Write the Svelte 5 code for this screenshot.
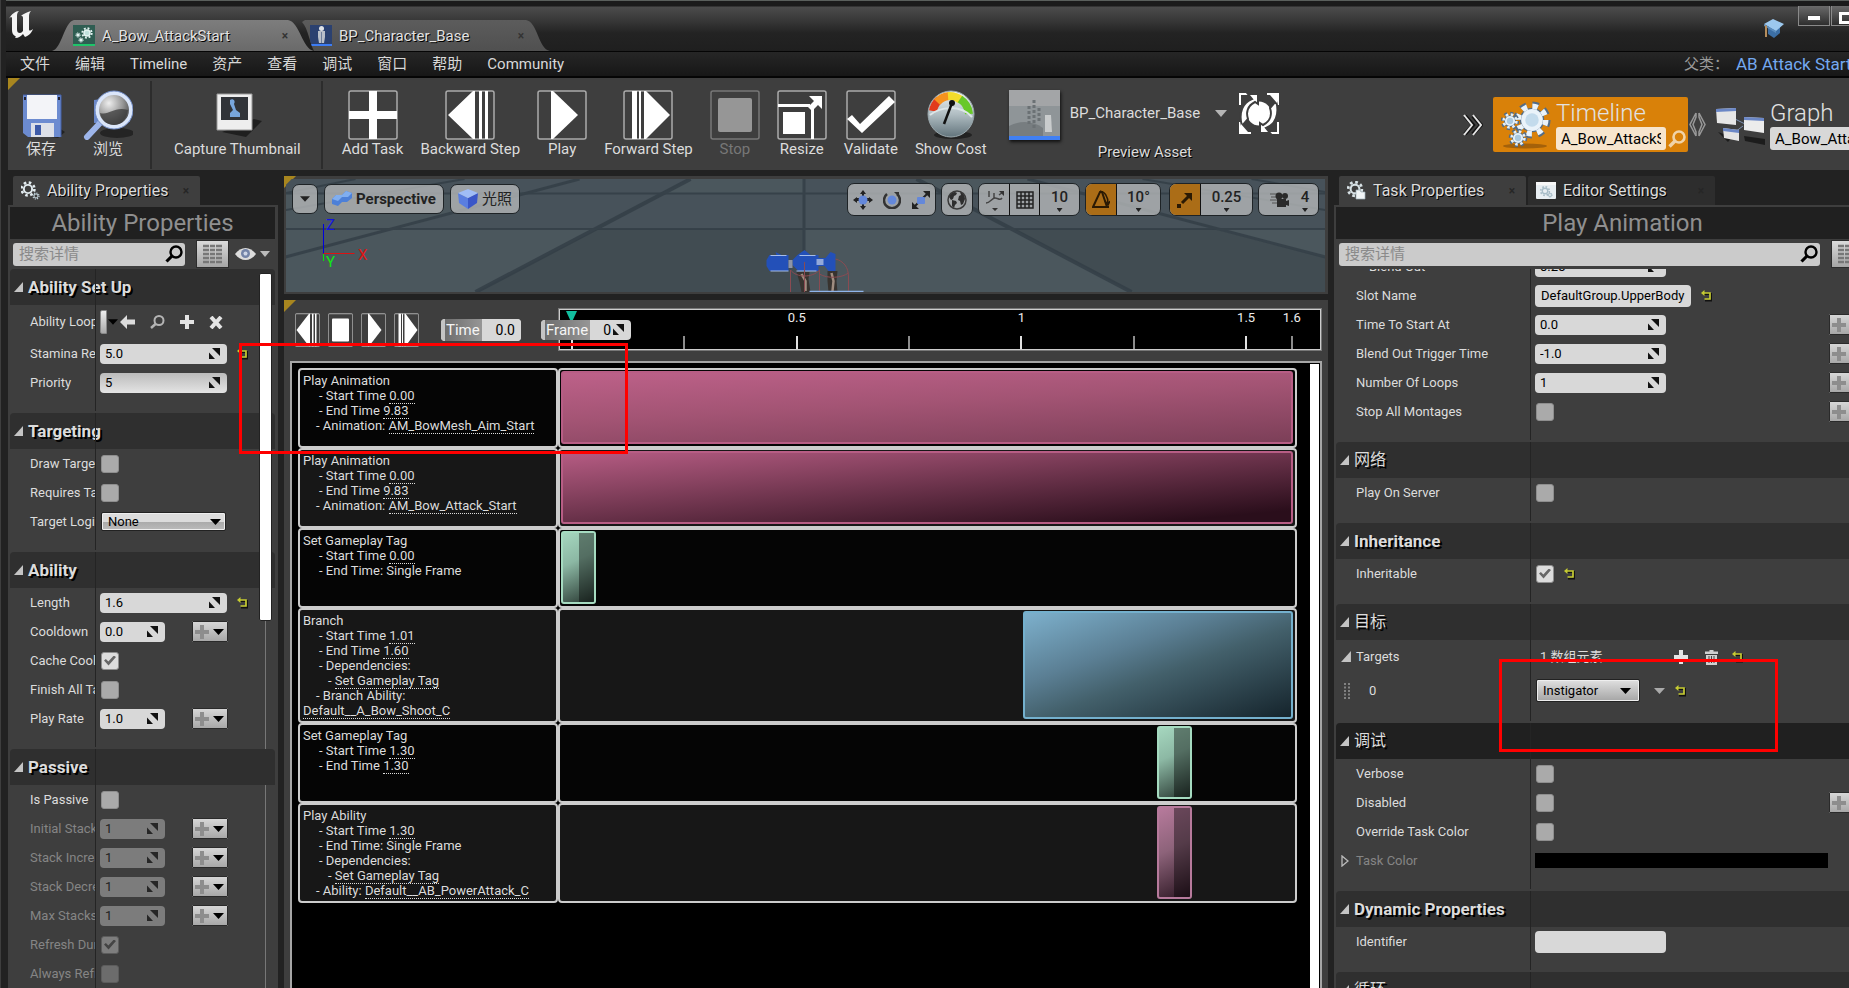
<script>
  const menus = ['文件', '编辑', 'Timeline', '资产', '查看', '调试', '窗口', '帮助', 'Community'];

  const tools = [
    { icon: 'add', label: 'Add Task' },
    { icon: 'back', label: 'Backward Step' },
    { icon: 'play', label: 'Play' },
    { icon: 'fwd', label: 'Forward Step' },
    { icon: 'stop', label: 'Stop', off: true },
    { icon: 'resize', label: 'Resize' },
    { icon: 'check', label: 'Validate' },
    { icon: 'cost', label: 'Show Cost' }
  ];

  const ability = [
    { title: 'Ability Set Up', rows: [
      { label: 'Ability Loop', kind: 'asset', tall: true },
      { label: 'Stamina Re', kind: 'num', value: '5.0', reset: true },
      { label: 'Priority', kind: 'num', value: '5', shade: true }
    ] },
    { title: 'Targeting', rows: [
      { label: 'Draw Target', kind: 'check' },
      { label: 'Requires Target', kind: 'check' },
      { label: 'Target Logic', kind: 'select', value: 'None' }
    ] },
    { title: 'Ability', rows: [
      { label: 'Length', kind: 'num', value: '1.6', reset: true },
      { label: 'Cooldown', kind: 'short', value: '0.0', plus: true },
      { label: 'Cache Cooldown', kind: 'check', on: true },
      { label: 'Finish All Tasks', kind: 'check' },
      { label: 'Play Rate', kind: 'short', value: '1.0', plus: true }
    ] },
    { title: 'Passive', rows: [
      { label: 'Is Passive', kind: 'check' },
      { label: 'Initial Stacks', kind: 'short', value: '1', plus: true, off: true },
      { label: 'Stack Increase', kind: 'short', value: '1', plus: true, off: true },
      { label: 'Stack Decrease', kind: 'short', value: '1', plus: true, off: true },
      { label: 'Max Stacks', kind: 'short', value: '1', plus: true, off: true },
      { label: 'Refresh Duration', kind: 'check', on: true, off: true },
      { label: 'Always Refresh', kind: 'check', off: true }
    ] }
  ];

  const task = [
    { rows: [
      { label: 'Blend Out', kind: 'num', value: '0.25', inset: true },
      { label: 'Slot Name', kind: 'text', value: 'DefaultGroup.UpperBody', reset: true },
      { label: 'Time To Start At', kind: 'num', value: '0.0', plus: true },
      { label: 'Blend Out Trigger Time', kind: 'num', value: '-1.0', plus: true },
      { label: 'Number Of Loops', kind: 'num', value: '1', plus: true },
      { label: 'Stop All Montages', kind: 'check', plus: true }
    ] },
    { title: '网络', cjk: true, rows: [{ label: 'Play On Server', kind: 'check' }] },
    { title: 'Inheritance', rows: [{ label: 'Inheritable', kind: 'check', on: true, reset: true }] },
    { title: '目标', cjk: true, rows: [
      { label: 'Targets', kind: 'array', tall: true, open: true },
      { label: '0', kind: 'element', mid: true, grip: true }
    ] },
    { title: '调试', cjk: true, dark: true, rows: [
      { label: 'Verbose', kind: 'check' },
      { label: 'Disabled', kind: 'check', plus: true },
      { label: 'Override Task Color', kind: 'check' },
      { label: 'Task Color', kind: 'color', closed: true, off: true }
    ] },
    { title: 'Dynamic Properties', rows: [{ label: 'Identifier', kind: 'blank', value: '' }] },
    { title: '循环', cjk: true, rows: [] }
  ];

  const ticks = [0, 1, 2, 3, 4, 5, 6].map((n) => ({
    x: 1.6 + n * 14.78,
    major: n % 2 === 0,
    text: n > 0 && n % 2 === 0 ? String(n / 4) : ''
  }));
  ticks.push({ x: 96.3, major: false, text: '1.6' });

  const tasks = [
    { name: 'Play Animation', color: 'pink soft', start: 0, span: 100, lines: [
      [1, 'Start Time', '0.00'], [1, 'End Time', '9.83'], [0, 'Animation:', 'AM_BowMesh_Aim_Start']] },
    { name: 'Play Animation', color: 'pink', start: 0, span: 100, lines: [
      [1, 'Start Time', '0.00'], [1, 'End Time', '9.83'], [0, 'Animation:', 'AM_Bow_Attack_Start']] },
    { name: 'Set Gameplay Tag', color: 'mint', start: 0, lines: [
      [1, 'Start Time', '0.00'], [1, 'End Time: Single Frame', '']] },
    { name: 'Branch', color: 'blue', start: 63.1, span: 36.9, lines: [
      [1, 'Start Time', '1.01'], [1, 'End Time', '1.60'], [1, 'Dependencies:', ''],
      [2, '', 'Set Gameplay Tag'], [0, 'Branch Ability:', 'Default__A_Bow_Shoot_C', true]] },
    { name: 'Set Gameplay Tag', color: 'mint', start: 81.4, lines: [
      [1, 'Start Time', '1.30'], [1, 'End Time', '1.30']] },
    { name: 'Play Ability', color: 'mauve', start: 81.4, lines: [
      [1, 'Start Time', '1.30'], [1, 'End Time: Single Frame', ''], [1, 'Dependencies:', ''],
      [2, '', 'Set Gameplay Tag'], [0, 'Ability:', 'Default__AB_PowerAttack_C']] }
  ];
</script>

{#snippet reset()}
  <button class="bare reset" aria-label="Reset">
    <svg width="11" height="12" viewBox="0 0 11 12" fill="none"><path d="M3 4h7v6.500H4" stroke="#111" stroke-width="2" /><path d="M2 3h7v6H3.500" stroke="#c6cc32" stroke-width="1.700" /><path d="M0 3l3.500-3v6z" fill="#c6cc32" /></svg>
  </button>
{/snippet}

{#snippet spin()}
  <svg class="spin" width="11" height="11" viewBox="0 0 11 11"><path d="M3 0h8v8zM0 4.500l6 6.500H0z" fill="#111" /></svg>
{/snippet}

{#snippet plusButton()}
  <button class="plus" aria-label="Set">
    <svg width="30" height="14" viewBox="0 0 30 14"><path d="M5 0h4v5h5v4H9v5H5V9H0V5h5z" fill="#8d8d8d" /><path d="M18 4h11l-5.500 6z" fill="#000" /></svg>
  </button>
{/snippet}

{#snippet lens(color, w)}
  <svg width="18" height="18" viewBox="0 0 18 18" fill="none" stroke={color} stroke-width={w}><circle cx="11" cy="7" r="5.500" /><path d="M7 11l-5.500 5.500" stroke-width={w * 1.3} /></svg>
{/snippet}

{#snippet search(id)}
  <label class="search"><input {id} placeholder="搜索详情" aria-label="搜索详情" />{@render lens('#000', 2.4)}</label>
  <button class="grid-btn" aria-label="Matrix">
    <svg width="19" height="20" viewBox="0 0 19 20"><path d="M0 2h6M7 2h5M13 2h6M0 6h6M7 6h5M13 6h6M0 10h6M7 10h5M13 10h6M0 14h6M7 14h5M13 14h6M0 18h6M7 18h5M13 18h6" stroke="#777" stroke-width="2.400" /></svg>
  </button>
{/snippet}

{#snippet gear(cx, cy, r, fill, hole)}
  <g transform="translate({cx} {cy})">
    <circle r={r * 0.86} fill="none" stroke={fill} stroke-width={r * 0.34} stroke-dasharray="{r * 0.34} {r * 0.335}" />
    <circle r={r * 0.68} {fill} />
    <circle r={r * 0.42} fill={hole} />
  </g>
{/snippet}

{#snippet transport(icon, w, h)}
  <svg width={w} height={h} viewBox="0 0 50 50" preserveAspectRatio="none">
    <rect x="1" y="1" width="48" height="48" rx="2" fill="none" stroke={icon === 'stop' ? '#777' : '#aaa'} stroke-width="1.500" />
    {#if icon === 'add'}<path d="M21 1h8v20h20v8H29v20h-8V29H1v-8h20z" fill="#fff" />
    {:else if icon === 'back'}<path d="M3 25L28 1h2v48h-2zM34 1h3v48h-3zM40 1h3v48h-3z" fill="#fff" />
    {:else if icon === 'play'}<path d="M14 1h2l25 24-25 24h-2z" fill="#fff" />
    {:else if icon === 'fwd'}<path d="M9 1h5v48H9zM16 1h2v48h-2zM21 1h2l24 24-24 24h-2z" fill="#fff" />
    {:else if icon === 'stop'}<rect x="8" y="8" width="34" height="34" rx="2" fill="#969696" />
    {:else if icon === 'whitestop'}<rect x="8" y="8" width="34" height="34" rx="2" fill="#fff" />
    {:else if icon === 'resize'}<path d="M6 22h22v22H6zM1 14h32v3H1zM34 18h3v31h-3zM32 6h13v13l-4-4-6 6-4-4 6-6z" fill="#fff" />
    {:else if icon === 'check'}<path d="M1 29l5-4 8 9L43 6l6 6-33 31z" fill="#fff" />{/if}
  </svg>
{/snippet}

{#snippet details(sections, side)}
  {#each sections as s, si}
    <section class="section">
      {#if s.title}
        <h3 class:cjk={s.cjk} class:dark={s.dark}>
          <svg width="9" height="10" viewBox="0 0 9 10"><path d="M9 0v10H0z" fill="#c4c4c4" /></svg>{s.title}
        </h3>
      {/if}
      {#each s.rows as r, ri}
        {@const id = `${side}-${si}-${ri}`}
        <div class="row" class:tall={r.tall} class:mid={r.mid} class:off={r.off}>
          <label class="name" class:inset={r.inset || r.grip} for={id}>
            {#if r.open}<svg class="mark" width="10" height="11" viewBox="0 0 9 10"><path d="M9 0v10H0z" fill="#c4c4c4" /></svg>{/if}
            {#if r.closed}<svg class="mark" width="8" height="12" viewBox="0 0 8 12"><path d="M1 1l6 5-6 5z" fill="none" stroke="#bbb" stroke-width="1.300" /></svg>{/if}
            {#if r.grip}<svg class="mark grip" width="6" height="17" viewBox="0 0 6 17"><path d="M1 0v17M5 0v17" stroke="#999" stroke-width="1.500" stroke-dasharray="2 1.500" /></svg>{/if}
            {r.label}
          </label>
          <div class="val">
            {#if r.kind === 'num' || r.kind === 'short'}
              <span class="field {r.kind}" class:shade={r.shade}><input {id} value={r.value} disabled={r.off} />{@render spin()}</span>
            {:else if r.kind === 'text'}
              <span class="field named"><input {id} value={r.value} /></span>
            {:else if r.kind === 'blank'}
              <span class="field num high"><input {id} value="" /></span>
            {:else if r.kind === 'check'}
              <input class="tick" type="checkbox" {id} checked={r.on} disabled={r.off} />
            {:else if r.kind === 'select'}
              <span class="drop"><select {id}><option>{r.value}</option></select><svg width="11" height="6" viewBox="0 0 11 6"><path d="M0 0h11L5.500 6z" /></svg></span>
            {:else if r.kind === 'asset'}
              <button class="sliver" {id} aria-label="Asset"></button>
              <svg width="10" height="6" viewBox="0 0 11 6"><path d="M0 0h11L5.500 6z" fill="#000" /></svg>
              <div class="actions">
                <button class="bare" aria-label="Use"><svg width="15" height="14" viewBox="0 0 15 14"><path d="M0 7l7-7v4.500h8v5H7V14z" fill="#dcdcdc" /></svg></button>
                <button class="bare" aria-label="Browse"><svg width="15" height="14" viewBox="0 0 15 14" fill="none" stroke="#b4b4b4"><circle cx="9" cy="5.500" r="4.500" stroke-width="2" /><path d="M5.500 9L1 13" stroke-width="2.500" /></svg></button>
                <button class="bare" aria-label="Add"><svg width="14" height="14" viewBox="0 0 14 14"><path d="M5 0h4v5h5v4H9v5H5V9H0V5h5z" fill="#e4e4e4" /></svg></button>
                <button class="bare" aria-label="Clear"><svg width="14" height="13" viewBox="0 0 14 13"><path d="M2 1l10 11M12 1L2 12" stroke="#e4e4e4" stroke-width="4" /></svg></button>
              </div>
            {:else if r.kind === 'array'}
              <span class="count">1 数组元素</span>
              <button class="bare" {id} aria-label="Add element"><svg width="14" height="14" viewBox="0 0 14 14"><path d="M5 0h4v5h5v4H9v5H5V9H0V5h5z" fill="#e4e4e4" /></svg></button>
              <button class="bare trash" aria-label="Remove all"><svg width="13" height="15" viewBox="0 0 13 15"><path d="M0 1.500h4.500V0h4v1.500H13V4H0zM1 5h11v10H1z" fill="#d0d0d0" /><path d="M4 6v7M6.500 6v7M9 6v7" stroke="#444" /></svg></button>
              {@render reset()}
            {:else if r.kind === 'element'}
              <span class="drop wide"><select {id}><option>Instigator</option></select><svg width="11" height="6" viewBox="0 0 11 6"><path d="M0 0h11L5.500 6z" /></svg></span>
              <svg class="more" width="11" height="6" viewBox="0 0 11 6"><path d="M0 0h11L5.500 6z" fill="#aaa" /></svg>
              {@render reset()}
            {:else if r.kind === 'color'}
              <button class="swatch" {id} aria-label="Task Color"></button>
            {/if}
            {#if r.reset}{@render reset()}{/if}
          </div>
          {#if r.plus}{@render plusButton()}{/if}
        </div>
      {/each}
    </section>
  {/each}
{/snippet}

<div class="app">
  <header class="title">
    <svg class="ue" width="26" height="29" viewBox="0 0 26 29"><path d="M1 9C3 4 8 1 11 1 9 3 9 4 9 7v12c0 3 1 4 3 4 1 0 2-1 3-2V8c0-2-1-2-2-2 2-2 6-4 10-5-2 2-2 4-2 6v12c0 2 1 2 4 0-2 5-5 7-8 8l-2-3c-2 2-4 4-8 4 1-1 1-2 0-2-2-1-3-3-3-6V8C3.500 6 2 7 1 9z" fill="#f4f4f4" /></svg>
    <nav class="tabs">
      <button class="tab current">
        <svg width="22" height="21" viewBox="0 0 22 21"><rect width="22" height="21" fill="#2f5d52" /><rect y="19" width="22" height="2" fill="#1fc46a" />{@render gear(14, 8, 5.5, '#e4f4f2', '#bfe0dc')}{@render gear(5, 10, 2.6, '#e4f4f2', '#e4f4f2')}{@render gear(8, 15, 2.6, '#e4f4f2', '#e4f4f2')}</svg>
        <span>A_Bow_AttackStart</span><i>×</i>
      </button>
      <button class="tab other">
        <svg width="22" height="21" viewBox="0 0 22 21"><rect width="22" height="21" fill="#2b4170" /><rect y="19" width="22" height="2" fill="#3c7cf4" /><path d="M8 6h7v6l-1 6h-5l-1-6z" fill="#b9bfc9" /><circle cx="11.500" cy="3.500" r="2.500" fill="#dfe2e6" /><path d="M11.500 7v11" stroke="#6f7f9c" /></svg>
        <span>BP_Character_Base</span><i>×</i>
      </button>
    </nav>
    <svg class="cap" width="22" height="20" viewBox="0 0 22 20"><path d="M5 8v7l6 4 6-5V7z" fill="#3c6fa5" /><path d="M1 5l9-5 11 5-8 7z" fill="#9cc8ee" /><path d="M1 5l12 7v2L1 7z" fill="#5c8dbd" /><path d="M2 6v12h2V7z" fill="#b58d5c" /></svg>
    <div class="win">
      <button aria-label="Minimize"><svg width="14" height="6" viewBox="0 0 14 6"><rect x=".5" y=".5" width="13" height="5" fill="#fff" stroke="#444" /></svg></button>
      <button aria-label="Maximize"><svg width="16" height="12" viewBox="0 0 16 12"><rect x="1.500" y="1.500" width="13" height="9" fill="none" stroke="#fff" stroke-width="3" /></svg></button>
    </div>
  </header>

  <nav class="menu">
    {#each menus as m}<button class="bare">{m}</button>{/each}
    <span class="parent">父类：</span><a href="#parent">AB Attack Start</a>
  </nav>

  <div class="toolbar corner">
    <button class="tool">
      <svg width="50" height="50" viewBox="0 0 50 50"><path d="M14 44l28 4 7-6-6-4z" fill="#222" /><path d="M7 5h38v42H12l-5-4z" fill="#6c8bd0" /><path d="M7 5h38v42" fill="none" stroke="#4560a8" /><path d="M11 5h30v24H11z" fill="#f3f4f8" /><path d="M15 33h23v14H15z" fill="#dde0e8" /><path d="M19 35h6v10h-6z" fill="#3e5ba8" /><path d="M8 7h2v3H8zM42 7h2v3h-2z" fill="#223" /></svg>
      保存
    </button>
    <button class="tool">
      <svg width="50" height="50" viewBox="0 0 50 50"><defs><radialGradient id="glass" cx=".35" cy=".3" r=".8"><stop offset="0" stop-color="#eee" /><stop offset=".5" stop-color="#999" /><stop offset="1" stop-color="#333" /></radialGradient></defs><ellipse cx="34" cy="43" rx="17" ry="5" fill="#242424" /><path d="M11 10l30-4 6 26-36 1z" fill="#6a88ca" /><path d="M4 47l14-15" stroke="#9db5ea" stroke-width="6" stroke-linecap="round" /><circle cx="31" cy="20" r="17" fill="url(#glass)" stroke="#dbe6fa" stroke-width="4" /><circle cx="31" cy="20" r="19" fill="none" stroke="#6f8ac4" /><path d="M17 23c9 3 14-7 28-3-1 9-7 15-14 15S18 30 17 23z" fill="#3a3a3a" opacity=".75" /></svg>
      浏览
    </button>
    <hr />
    <button class="tool capture">
      <svg width="50" height="50" viewBox="0 0 50 50"><path d="M10 42l24 5 16-16-8-2z" fill="#1f1f1f" /><path d="M5 4h35v36H5z" fill="#eee" stroke="#999" /><path d="M9 7h27v23H9z" fill="#303338" /><path d="M18 10c3-2 6 1 4 4l2 6 4 3v4H18v-4l3-3-3-6z" fill="#77a6dd" /></svg>
      Capture Thumbnail
    </button>
    <hr />
    {#each tools as t}
      <button class="tool" class:off={t.off}>
        {#if t.icon === 'cost'}
          <svg width="50" height="50" viewBox="0 0 50 50"><defs><linearGradient id="dial" x2="0" y2="1"><stop offset="0" stop-color="#f2f6f7" /><stop offset=".5" stop-color="#b1bec3" /><stop offset="1" stop-color="#62747c" /></linearGradient></defs><ellipse cx="27" cy="45" rx="19" ry="4" fill="#222" /><circle cx="25" cy="24" r="23" fill="url(#dial)" stroke="#9aa8ad" /><path d="M7 21A19 19 0 0 1 13 10" stroke="#e23a1c" stroke-width="8" fill="none" /><path d="M11 12A19 19 0 0 1 23 6" stroke="#f6921e" stroke-width="8" fill="none" /><path d="M22 6A19 19 0 0 1 35 10" stroke="#f3dc2c" stroke-width="8" fill="none" /><path d="M34 9A20 20 0 0 1 43 24" stroke="#68c828" stroke-width="8" fill="none" /><path d="M4 25C14 17 34 14 46 27" stroke="#dce5e7" stroke-width="2" fill="none" /><path d="M18 34l8-21" stroke="#111" stroke-width="2.500" /><circle cx="26" cy="13" r="3" fill="#111" /></svg>
        {:else}{@render transport(t.icon, 50, 50)}{/if}
        {t.label}
      </button>
    {/each}
    <button class="thumb" aria-label="Preview thumbnail">
      <svg width="51" height="46" viewBox="0 0 51 46"><rect width="51" height="46" fill="#8f9598" /><path d="M0 0h51v16H0z" fill="#a3a5a7" /><path d="M0 36c12-6 24-5 34 2v8H0z" fill="#777d80" /><path d="M25 10v30M20 16v18M30 18v15" stroke="#6b7174" stroke-width="3" stroke-dasharray="3 2" /><path d="M36 25h6l1 17h-7z" fill="#c9cccd" /></svg>
    </button>
    <div class="asset">
      <button class="bare picker">BP_Character_Base <svg width="12" height="7" viewBox="0 0 12 7"><path d="M0 0h12L6 7z" fill="#b5b5b5" /></svg></button>
      <span>Preview Asset</span>
    </div>
    <button class="bare focus" aria-label="Use selected">
      <svg width="40" height="41" viewBox="0 0 40 41"><path d="M1 12V1h11M28 1h11v11M39 29v11H28M12 40H1V29" fill="none" stroke="#fff" stroke-width="2" /><circle cx="20" cy="20.500" r="12" fill="#fff" /><path d="M3 33C-1 20 4 9 13 6L9 1h10v10l-3-2C8 13 7 20 9 26zM37 8c4 13-1 24-10 27l4 5H21V30l3 2c8-4 9-11 7-17z" fill="#fff" stroke="#3e3e3e" stroke-width="2" /><path d="M2 39l7 0-7-8z" fill="#fff" /><path d="M38 2h-7l7 8z" fill="#fff" /></svg>
    </button>
    <svg class="overflow" width="20" height="22" viewBox="0 0 20 22" fill="none"><path d="M2 2l8 9-8 9M10 2l8 9-8 9" stroke="#111" stroke-width="4" /><path d="M1 1l8 10-8 10M10 1l8 10-8 10" stroke="#e4e4e4" stroke-width="2" /></svg>
    <div class="mode active">
      <svg width="50" height="50" viewBox="0 0 50 50"><ellipse cx="24" cy="46" rx="22" ry="2.500" fill="#a4610a" />{@render gear(31, 20, 18, '#536c86', '#536c86')}{@render gear(31, 20, 16, '#eaf3fa', '#c3dbec')}{@render gear(9, 21, 9, '#536c86', '#536c86')}{@render gear(9, 21, 7.5, '#e4eff7', '#a9c9e0')}{@render gear(17, 38, 9, '#536c86', '#536c86')}{@render gear(17, 38, 7.5, '#e4eff7', '#a9c9e0')}</svg>
      <div><h2>Timeline</h2><p><input value="A_Bow_AttackStart" aria-label="Timeline asset" />{@render lens('#f0d3a8', 2.6)}</p></div>
    </div>
    <svg class="link" width="17" height="25" viewBox="0 0 17 25" fill="none" stroke="#999" stroke-width="1.500"><path d="M7 1L1 12.500 7 24M10 1l6 11.500L10 24M7 1v4L4 12.500 7 20v4M10 1v4l3 7.500-3 7.500v4" /></svg>
    <div class="mode">
      <svg width="50" height="50" viewBox="0 0 50 50"><path d="M3 32l14 5-4 5zM29 36l21 3v6l-20-4z" fill="#1c1c1c" /><path d="M18 18l12 6M20 32l8-6" stroke="#7e93b5" /><path d="M1 9l20-1v17l-19-2z" fill="#e6e6e6" /><path d="M1 9l20-1v3l-20 1z" fill="#6b87c6" /><path d="M29 17l20 1v15l-20-3z" fill="#ececec" /><path d="M29 17l20 1v3l-20-1z" fill="#6b87c6" /><path d="M8 28l16 2v11l-15-3z" fill="#e4e4e4" /><path d="M8 28l16 2v3L8 31z" fill="#6b87c6" /></svg>
      <div><h2>Graph</h2><p><input value="A_Bow_AttackStart" aria-label="Graph asset" /></p></div>
    </div>
  </div>

  <main>
    <aside class="left">
      <div class="dock"><button class="dtab"><svg width="19" height="19" viewBox="0 0 19 19">{@render gear(7, 8, 7.5, '#e3ecf0', '#3e3e3e')}{@render gear(15, 15, 3.5, '#c3d4dc', '#3e3e3e')}</svg>Ability Properties<i>×</i></button></div>
      <div class="panel">
        <h1>Ability Properties</h1>
        <div class="bar">{@render search('find-ability')}
          <button class="bare eye" aria-label="View options"><svg width="36" height="14" viewBox="0 0 36 14"><path d="M0 7c6-8 15-8 21 0-6 8-15 8-21 0z" fill="#dcdcdc" /><circle cx="10.500" cy="6.500" r="4.500" fill="#7484a8" /><circle cx="10.500" cy="6.500" r="2" fill="#cdd5e6" /><path d="M25 4h10l-5 6z" fill="#bbb" /></svg></button>
        </div>
        <div class="body">{@render details(ability, 'ability')}<div class="scroll"></div></div>
      </div>
    </aside>

    <div class="center">
      <div class="viewport corner">
        <div class="scene">
          <svg class="floor" viewBox="286 179 1040 113" preserveAspectRatio="xMidYMid slice">
            <rect x="286" y="179" width="1040" height="113" fill="#47525a" />
            <path d="M286 229h312L476 292H286zM804 229h210l118 63H804zM1210 229h116v28zM691 179h113v14H664zM286 193h240L400 229H286zM917 179h111l60 14H944z" fill="#4b575d" />
            <path d="M598 229h206v63H476zM1014 229h200l112 29v34h-194z" fill="#414c52" />
            <g fill="none" stroke="#333e46" stroke-width="3" opacity=".8">
              <path d="M286 193.500h1040M286 229h1040" stroke-width="2" /><path d="M804.500 179v113" />
              <path d="M691 179L476 292M917 179l215 113" stroke-width="4" /><path d="M580 179L286 257M1028 179l298 78" /><path d="M465 179l-179 31M356 179l-70 14M1143 179l183 31M1252 179l74 13" stroke-width="2" />
            </g>
            <path d="M767 260l3-5h7l-1-3 6 3h7v16h-19l-3-5zM793 260l5-5 7-5 6 5h8v16h-20l-6-6zM819 258h7l5-6 5 2v17h-7l-4-5h-6z" fill="#2350b8" />
            <path d="M789 260h4v8h-4z" fill="#8d94a6" /><path d="M771 271h18M797 271h20M800 255.500h16M771 255.500h16" stroke="#a7bde8" /><path d="M817 259h7v6h-7z" fill="#93a9da" />
            <path d="M797 272h13l-1 7 2 13h-9l-2-10zM828 271h10l-1 10 1 11h-9l-1-11z" fill="#38332f" /><path d="M802 274l4 7v10M832 273l2 8-1 10" fill="none" stroke="#a08d80" stroke-width="2.500" />
            <g fill="none" stroke="#8a4b52"><path d="M791 292v-22c6 8 22 8 29 0v22M836 259c8 2 13 8 13 18v15M805 262v30M820 274c8 5 22 4 29-1" /></g>
            <path d="M810 291.500h54" stroke="#8fb4ea" stroke-width="1.500" />
          </svg>
          <svg class="axis" width="50" height="60" viewBox="0 0 50 60"><path d="M5.500 36V6" stroke="#00d" /><path d="M5.500 35.500h31" stroke="#d11" /><path d="M5.500 36v7" stroke="#0e0" /><text x="8" y="12" fill="#1414e0">Z</text><text x="40" y="42" fill="#e01414">X</text><text x="8" y="49" fill="#14e614">Y</text></svg>
          <div class="vbar">
            <div class="chips">
              <button class="chip small" aria-label="Viewport options"><svg width="10" height="6" viewBox="0 0 11 6"><path d="M0 0h11L5.500 6z" fill="#222" /></svg></button>
              <button class="chip"><svg width="20" height="16" viewBox="0 0 20 16"><path d="M0 8l4-4h6l4-4 6 2v5l-5 4h-5l-4 4-6-2z" fill="#4d80d8" /><path d="M0 8l4-4h6l4-4 6 2-4 4h-6l-4 4z" fill="#80aef0" /></svg><b>Perspective</b></button>
              <button class="chip"><svg width="20" height="20" viewBox="0 0 20 20"><path d="M0 4l10 5v11L1 14z" fill="#5a7ee0" /><path d="M20 4L10 9v11l9-6z" fill="#3a56c8" /><path d="M0 4l10-4 10 4-10 5z" fill="#a0bdf6" /></svg>光照</button>
            </div>
            <div class="group three">
              <button><svg width="20" height="20" viewBox="0 0 20 20"><path d="M10 0l3 4h-2v4h5V7l4 3-4 3v-2h-5v5h2l-3 4-3-4h2v-5H4v2L0 10l4-3v1h5V4H7z" fill="#222" /><circle cx="10" cy="10" r="4.500" fill="#6488da" /></svg></button>
              <button><svg width="18" height="18" viewBox="0 0 18 18"><path d="M4 3a8 8 0 1 0 10 0" fill="none" stroke="#333" stroke-width="2.500" /><path d="M11 1h5v5z" fill="#333" /><circle cx="9" cy="9" r="4.500" fill="#6488da" /></svg></button>
              <button><svg width="20" height="20" viewBox="0 0 20 20"><path d="M2 18L18 2" stroke="#222" stroke-width="2" /><path d="M12 1h7v7zM1 12v7h7z" fill="#222" /><rect x="6" y="7" width="8" height="7" rx="1" fill="#6488da" /></svg></button>
            </div>
            <div class="group">
              <button><svg width="20" height="20" viewBox="0 0 20 20"><circle cx="10" cy="10" r="9" fill="#a2a5a7" stroke="#3a3a3a" stroke-width="1.500" /><path d="M2 7c1-3 4-5 6-5l2 1-1 2-2 1-1 3-2 1zM5 10l4 1 1 2-2 2-1 3-2-2zM13 2c3 1 5 4 5 7l-2 5-2 1-1-4-2-1 1-4 2-1z" fill="#2e2e2e" /></svg></button>
            </div>
            <div class="group split g3">
              <button><svg width="19" height="24" viewBox="0 0 19 24"><path d="M1 15c4 0 6-5 9-5s5 3 7 0M4 9V3M14 7l4-3M9 10V5" fill="none" stroke="#444" stroke-width="1.500" /><path d="M14 3h5v5zM7 20h6l-3 3z" fill="#333" /></svg></button>
              <button><svg width="18" height="18" viewBox="0 0 18 18"><path d="M1 1h16v16H1zM1 5h16M1 9h16M1 13h16M5 1v16M9 1v16M13 1v16" fill="none" stroke="#222" stroke-width="1.500" /></svg></button>
              <button class="pick"><b>10</b></button>
            </div>
            <div class="group split">
              <button class="lit"><svg width="18" height="19" viewBox="0 0 18 19"><path d="M1 17L8 2l2 0 5 15zM1 17h16" fill="none" stroke="#2b1a04" stroke-width="2" /><path d="M8 1c6 1 8 6 8 13M13 11l3 4 2-4" fill="none" stroke="#2b1a04" stroke-width="1.500" /></svg></button>
              <button class="pick"><b>10°</b></button>
            </div>
            <div class="group split far">
              <button class="lit"><svg width="16" height="16" viewBox="0 0 16 16"><path d="M5 11l7-7" stroke="#2b1a04" stroke-width="3" /><path d="M7 1h8v8zM0 12h4v4H0z" fill="#2b1a04" /></svg></button>
              <button class="pick wider"><b>0.25</b></button>
            </div>
            <div class="group speed">
              <button><svg width="19" height="15" viewBox="0 0 19 15"><path d="M0 2h8M1 5h9M0 8h8M2 11h8" stroke="#555" /><circle cx="9" cy="4" r="3.500" fill="#2a2a2a" /><circle cx="15" cy="4" r="3" fill="#2a2a2a" /><path d="M7 7h9v2l3-1v6l-3-1v2H7z" fill="#2a2a2a" /></svg></button>
              <button class="pick thin"><b>4</b></button>
            </div>
          </div>
        </div>
      </div>

      <div class="timeline corner">
        <div class="head">
          <div class="controls">
            {#each ['back', 'whitestop', 'play', 'fwd'] as c}<button class="bare" aria-label={c}>{@render transport(c, 25, 34)}</button>{/each}
            <label class="meter first"><span>Time</span><input value="0.0" /></label>
            <label class="meter second"><span>Frame</span><input value="0" />{@render spin()}</label>
          </div>
          <div class="ruler">
            <svg class="play-head" width="11" height="12" viewBox="0 0 11 12"><path d="M0 0h11L5.500 12z" fill="#12bfa0" /></svg>
            {#each ticks as t}
              <span class="mark-at" class:major={t.major} style="left: {t.x}%">{t.text}</span>
            {/each}
          </div>
        </div>
        <div class="box">
          <div class="tasks">
            {#each tasks as t}
              <div class="task">
                <div class="desc">
                  <div>{t.name}</div>
                  {#each t.lines as [level, text, link, wrap]}
                    <div class="l{level}">- {text}{#if wrap}<br />{:else if text && link}{' '}{/if}{#if link}<a href="#task" class:wrapped={wrap}>{link}</a>{/if}</div>
                  {/each}
                </div>
                <div class="lane"><div class="clip {t.color}" class:point={!t.span} style="margin-left: {t.start}%; width: {t.span ? t.span + '%' : ''}"></div></div>
              </div>
            {/each}
          </div>
          <div class="track"></div>
        </div>
      </div>
    </div>

    <aside class="right">
      <div class="dock">
        <button class="dtab"><svg width="19" height="19" viewBox="0 0 19 19">{@render gear(8, 8, 8, '#d8e2e6', '#3e3e3e')}<path d="M9 9h4l1 2h4v7H9z" fill="#f0f4f6" stroke="#9fb0b8" stroke-width=".7" /></svg>Task Properties<i>×</i></button>
        <button class="dtab idle"><svg width="20" height="17" viewBox="0 0 20 17"><rect width="20" height="17" rx="1" fill="#e8eef2" /><path d="M0 0h20v3H0z" fill="#f8f8f8" />{@render gear(9, 9, 5, '#a8bdc8', '#e8eef2')}{@render gear(14, 13, 2.5, '#8fa9b6', '#e8eef2')}</svg>Editor Settings<i>×</i></button>
      </div>
      <div class="panel">
        <h1>Play Animation</h1>
        <div class="bar">{@render search('find-task')}</div>
        <div class="body"><div class="rolled">{@render details(task, 'task')}</div></div>
      </div>
    </aside>
  </main>

  <div class="callout one"></div>
  <div class="callout two"></div>
</div>

<style>
  :global(body) { background: #222; }
  * { box-sizing: border-box; }
  .app {
    position: relative; height: 100vh; overflow: hidden;
    display: grid; grid-template-rows: 51px 27px 92px minmax(0, 1fr);
    background: #222; color: #dcdcdc;
    font: 13px/16px Roboto, "Noto Sans CJK SC", sans-serif;
    border-left: 1px solid #3e3e3e;
    padding-left: 7px;
  }
  button, input, select { font: inherit; color: inherit; margin: 0; }
  button { padding: 0; border: 0; background: none; display: flex; align-items: center; justify-content: center; }
  svg { flex: none; display: block; }
  h1, h2, h3, p { margin: 0; font-weight: 400; }
  i { font-style: normal; color: #333; font-weight: 700; font-size: 12px; }

  .title {
    display: flex; align-items: flex-start; margin-left: -2px;
    border-top: 1px solid #5a5f5c; padding-top: 5px;
    background: linear-gradient(#1b1b1b 5px, #4c4c4c 6px, #3a3a3a 18px, #232323 32px, #1f1f1f);
  }
  .ue { margin: 4px 0 0 2px; }
  .tabs { display: flex; margin: 14px 0 0 18px; height: 31px; }
  .tab { height: 31px; font-size: 15px; color: #e2e2e2; text-shadow: 1px 1px 0 #000; padding: 0 26px 0 21px; justify-content: flex-start; gap: 7px; }
  .tab span { flex: 1; text-align: left; }
  .current { width: 262px; z-index: 1; background: linear-gradient(#7d7d7d, #6a6a6a); clip-path: path('M0 31C10 29 12 2 22 0H236C248 2 250 29 262 31z'); }
  .other { width: 248px; margin-left: -12px; padding-left: 8px; background: linear-gradient(#5c5c5c, #505050); clip-path: path('M3 0H224C236 2 236 29 248 31H12C8 24 6 8 0 2z'); }
  .tab i { text-shadow: none; }
  .cap { margin: 13px 13px 0 auto; }
  .win { display: flex; width: 51px; overflow: hidden; gap: 1px; }
  .win button { width: 32px; height: 20px; flex: none; border: 1px solid #8a8a8a; border-top: 0; background: linear-gradient(#6a6a6a, #2e2e2e); padding-top: 4px; }

  .menu { display: flex; align-items: center; gap: 25px; padding-left: 14px; font-size: 15px; margin-left: -2px; border: solid #050505; border-width: 1px 0 2px; background: linear-gradient(#262626, #171717); overflow: hidden; white-space: nowrap; color: #d8d8d8; }
  .parent { margin-left: auto; color: #999; }
  .menu a { color: #74a9f0; text-decoration: none; font-size: 17px; width: 113px; margin-left: -18px; overflow: hidden; }

  .corner { background-image: linear-gradient(135deg, #a8861f 8px, transparent 9px); background-repeat: no-repeat; }
  .toolbar { display: flex; align-items: flex-start; gap: 17px; background-color: #3e3e3e; padding: 12px 0 0 8px; font-size: 15px; line-height: 18px; text-shadow: 1px 1px 0 #000; overflow: hidden; white-space: nowrap; }
  .toolbar > * { flex: none; }
  .tool { flex-direction: column; min-width: 50px; }
  .capture { padding: 0 3px; }
  .tool.off { color: #777; }
  hr { border: 0; width: 2px; height: 88px; margin: -9px 2px 0 0; background: #2c2c2c; }
  .thumb { margin-left: 5px; border-bottom: 4px solid #4080f4; box-shadow: 1px 2px 3px #111; }
  .asset { display: flex; flex-direction: column; margin: 14px 0 0 -7px; gap: 21px; }
  .picker { gap: 15px; }
  .asset span { align-self: center; margin-right: 7px; }
  .focus { margin: 3px 0 0 -5px; }
  .overflow { margin: 24px 0 0 auto; }
  .mode { display: flex; gap: 5px; height: 55px; margin-top: 7px; padding: 3px 2px 0 8px; }
  .active { background: #d98109; border-radius: 2px; width: 195px; margin-left: -7px; }
  .mode h2 { font-size: 24px; line-height: 27px; font-weight: 300; text-shadow: none; color: #e2e2e2; }
  .mode p { display: flex; align-items: center; gap: 2px; }
  .mode input { width: 110px; height: 23px; border: 0; border-radius: 3px; background: #d8d8d8; color: #000; padding: 0 5px; }
  .active input { background: #f7e5ce; }
  .link { margin: 22px -16px 0; }
  .mode:last-child { width: 142px; overflow: hidden; }

  main { display: grid; grid-template-columns: 270px minmax(0, 1fr) 515px; gap: 6px; padding-top: 6px; min-height: 0; }
  main > * { min-width: 0; min-height: 0; display: flex; flex-direction: column; }
  .dock { display: flex; gap: 2px; padding-left: 5px; height: 29px; flex: none; }
  .dtab { width: 187px; gap: 7px; background: #3e3e3e; font-size: 16px; text-shadow: 1px 1px 0 #000; justify-content: flex-start; padding: 0 8px; border-radius: 2px 2px 0 0; white-space: nowrap; }
  .dtab i { margin-left: auto; margin-right: 3px; text-shadow: none; color: #262626; }
  .idle { background: #2d2d2d; }
  .panel { flex: 1; min-height: 0; background: #3e3e3e; padding: 2px 2px 0; display: flex; flex-direction: column; overflow: hidden; }
  .left .panel { padding-right: 3px; }
  h1 { height: 32px; flex: none; background: #202020; color: #8f8f8f; font-size: 24px; line-height: 32px; text-align: center; }
  .bar { display: flex; align-items: center; height: 30px; flex: none; padding-left: 3px; }
  .search { flex: 1; display: flex; align-items: center; height: 23px; background: #cbcbcb; border-radius: 3px; padding: 0 2px 0 6px; min-width: 0; }
  .search input { flex: 1; min-width: 0; border: 0; background: none; font-size: 15px; padding: 0; outline: 0; }
  .search input::placeholder { color: #8a8a8a; opacity: 1; }
  .grid-btn { width: 33px; height: 28px; margin-left: 11px; flex: none; border: 1px solid #eee; background: linear-gradient(#dadada, #a5a5a5); outline: 1px solid #2c2c2c; outline-offset: -1px; }
  .eye { margin: 0 4px 0 6px; }
  .body { position: relative; flex: 1; min-height: 0; overflow: hidden; }
  .scroll { position: absolute; top: 4px; right: 3px; width: 13px; height: 348px; background: #fff; border: 1px solid #222; border-radius: 2px; }
  .body::before { content: ''; position: absolute; inset: 4px 9px 0 auto; width: 1px; background: #777; }

  .left { --split: 85px; }
  .right { --split: 194px; }
  .right .panel { padding-right: 0; }
  .right .panel h1, .right .panel .body { width: 573px; }
  .right .panel .bar { width: 528px; }
  .right .panel .body::before { display: none; }
  .rolled { margin-top: -17px; }
  .section { position: relative; padding-bottom: 14px; margin-bottom: 2px; }
  .section::after { content: ''; position: absolute; left: var(--split); top: 0; bottom: 0; width: 1px; background: #242424; }
  h3 { display: flex; align-items: center; gap: 5px; height: 36px; padding-left: 4px; background: #2f2f2f; border-radius: 4px 4px 0 0; font-size: 17px; font-weight: 700; text-shadow: 2px 2px 0 #000; }
  h3.cjk { font-weight: 400; font-size: 16px; }
  h3.dark { background: #202020; }
  .row { display: flex; align-items: center; height: 29px; }
  .row.tall { height: 34px; }
  .row.mid { height: 33px; }
  .name { position: relative; width: var(--split); flex: none; padding-left: 20px; overflow: hidden; white-space: nowrap; }
  .name.inset { padding-left: 33px; }
  .mark { position: absolute; left: 5px; top: 2px; }
  .grip { left: 8px; top: 0; }
  .off .name { color: #858585; }
  .val { display: flex; align-items: center; padding-left: 5px; flex: none; }
  .field { display: flex; align-items: center; height: 20px; background: #d8d8d8; color: #000; border-radius: 4px; padding: 0 7px 0 5px; }
  .field input { flex: 1; min-width: 0; border: 0; background: none; padding: 0; outline: 0; }
  .num { width: 127px; }
  .right .num { width: 131px; }
  .short { width: 65px; }
  .named { width: 156px; height: 22px; padding: 0 6px; }
  .high { height: 22px; }
  .shade { background: linear-gradient(#bbb, #e4e4e4); }
  .off .field { background: #7c7c7c; color: #222; }
  .off .spin { opacity: .8; }
  .reset { margin-left: 10px; }
  .tick { appearance: none; width: 18px; height: 18px; margin-left: 1px; background: #aaa; border: 1px solid #8e8e8e; border-radius: 3px; display: grid; place-items: center; }
  .tick:checked { background: #dcdcdc; }
  .tick:checked::before { content: ''; width: 12px; height: 10px; background: #666; clip-path: polygon(0 50%, 16% 34%, 36% 60%, 82% 0, 100% 14%, 38% 100%); }
  .off .tick { background: #6c6c6c; border-color: #5c5c5c; }
  .off .tick:checked { background: #7e7e7e; }
  .off .tick:checked::before { background: #444; }
  .plus { width: 36px; height: 21px; border: 1px solid #eee; border-radius: 1px; outline: 1px solid #2a2a2a; outline-offset: -1px; background: linear-gradient(#d6d6d6, #a8a8a8); }
  .left .plus { margin-left: 27px; }
  .right .plus { margin-left: auto; margin-right: 44px; }
  .drop { position: relative; margin-left: 1px; width: 125px; height: 19px; display: flex; align-items: center; }
  .drop.wide { width: 104px; height: 23px; }
  .drop select { appearance: none; width: 100%; height: 100%; border: 1px solid #222; box-shadow: inset 0 0 0 1px #eee; background: linear-gradient(#dcdcdc 50%, #aaa 52%, #bbb); color: #000; padding: 0 6px; border-radius: 2px; }
  .drop.wide select { background: linear-gradient(#e0e0e0, #a5a5a5); }
  .drop svg { position: absolute; right: 5px; pointer-events: none; }
  .drop.wide svg { right: 9px; }
  .more { margin-left: 14px; }
  .sliver { width: 7px; height: 24px; margin-right: 1px; background: linear-gradient(#eee, #aaa); border: 1px solid #888; border-radius: 2px 0 0 2px; }
  .actions { display: flex; gap: 15px; margin-left: 2px; align-items: center; }
  .count { width: 139px; padding-left: 5px; }
  .trash { margin: 0 4px 0 17px; }
  .swatch { width: 293px; height: 15px; background: #000; }

  .center { gap: 6px; }
  .viewport { height: 118px; flex: none; background-color: #3e3e3e; padding: 3px 3px 2px 2px; }
  .scene { position: relative; height: 100%; overflow: hidden; }
  .floor { position: absolute; inset: 0; width: 100%; height: 100%; }
  .axis { position: absolute; left: 32px; top: 39px; overflow: visible; }
  .axis text { font-size: 15px; }
  .corner.viewport::after { content: ''; position: absolute; width: 11px; height: 11px; margin: -116px 0 0 -2px; background: linear-gradient(135deg, #a8861f 7px, transparent 8px); }
  .vbar { position: relative; display: flex; padding: 4px 6px 0; gap: 5px; color: #222; font-size: 15px; }
  .chips { display: flex; gap: 6px; margin-right: auto; padding-top: 1px; }
  .chip { height: 30px; background: rgba(180, 182, 184, .8); border: 1px solid #1e2326; border-radius: 7px; padding: 0 7px; gap: 4px; }
  .small { width: 26px; }
  .group { display: flex; height: 33px; background: rgba(180, 182, 184, .8); border: 1px solid #1e2326; border-radius: 7px; overflow: hidden; }
  .group button { width: 30px; }
  .group.three button { width: 29px; }
  .split button + button { border-left: 1px solid #111; }
  .group .pick { width: 44px; flex-direction: column; gap: 1px; }
  .g3 .pick { width: 40px; }
  .pick::after { content: ''; width: 6px; height: 4px; background: #222; clip-path: polygon(0 0, 100% 0, 50% 100%); }
  .pick b { line-height: 19px; margin-top: 1px; font-weight: 500; }
  .group .wider { width: 52px; }
  .group .thin { width: 22px; }
  .speed { padding: 0 2px 0 5px; }
  .lit { background: #ab6d17; }
  .far { margin-left: 3px; }

  .timeline { flex: 1; min-height: 0; display: flex; flex-direction: column; background-color: #3e3e3e; padding: 8px 6px 0; gap: 10px; }
  .head { display: flex; height: 43px; flex: none; }
  .controls { width: 268px; flex: none; display: flex; align-items: center; padding-left: 5px; gap: 8px; z-index: 1; }
  .controls > * { flex: none; }
  .meter { display: flex; align-items: center; height: 22px; border-radius: 4px; background: #d8d8d8; color: #000; font-size: 14px; }
  .meter span { height: 100%; line-height: 22px; padding: 0 2px 0 1px; background: linear-gradient(90deg, #6e6e6e, #969696); color: #f4f4f4; font-size: 15px; border-left: 4px solid #c4c4c4; border-radius: 4px 0 0 4px; }
  .meter input { flex: 1; min-width: 0; border: 0; padding: 0 6px 0 0; text-align: right; background: #d8d8d8; border-radius: 4px; outline: 0; height: 100%; }
  .first { width: 80px; margin-left: 14px; }
  .second { width: 90px; margin-left: 12px; padding-right: 7px; height: 20px; }
  .second span { line-height: 20px; }
  .second input { padding-right: 2px; }
  .ruler { position: relative; flex: 1; border: 2px solid #ccc; outline: 1px solid #777; outline-offset: -1px; background: #000; }
  .play-head { position: absolute; left: 6px; top: 1px; }
  .mark-at { position: absolute; top: 0; bottom: 0; width: 30px; margin-left: -15px; text-align: center; font-size: 13px; color: #ececec; }
  .mark-at::after { content: ''; position: absolute; left: 14px; bottom: 0; width: 2px; height: 13px; background: #8c8c8c; }
  .major::after { background: #e0e0e0; }
  .box { flex: 1; min-height: 0; display: flex; border: 2px solid #a6a6a6; border-bottom: 0; background: #000; padding: 5px 1px 0 6px; overflow: hidden; }
  .tasks { flex: 1; min-width: 0; }
  .track { width: 9px; margin: -4px 0 0 13px; background: #fff; }
  .task { display: grid; grid-template-columns: 260px minmax(0, 1fr); min-height: 80px; background: #000; }
  .desc, .lane { border: 2px solid #ccc; border-radius: 4px; background: #050505; }
  .task:nth-child(even) .desc, .task:nth-child(even) .lane { background: #171717; }
  .desc { line-height: 15px; padding: 3px; white-space: nowrap; }
  .l0 { padding-left: 13px; }
  .l1 { padding-left: 16px; }
  .l2 { padding-left: 25px; }
  .desc a { color: inherit; text-decoration: none; border-bottom: 1px dotted #ddd; }
  .wrapped { margin-left: -13px; }
  .lane { padding: 1px 2px 2px 1px; display: flex; }
  .clip { border: 2px solid; border-radius: 3px; }
  .point { width: 35px; position: relative; }
  .point::after { content: ''; position: absolute; inset: 0 0 0 50%; background: rgba(0, 0, 0, .4); }
  .pink { border-color: #b85d85; background: linear-gradient(175deg, #b85d85, #8a4462 30%, #2a0e1b 90%); background-origin: border-box; }
  .pink.soft { background: linear-gradient(177deg, #bd6189, #a35474 45%, #7c3f58); }
  .blue { border-color: #74b0cd; background: linear-gradient(160deg, #7db0cc, #5b7f94 35%, #43606b 55%, #15242c); }
  .mint { border-color: #a5dbc0; background: linear-gradient(155deg, #a5d6be, #8cb8a4 40%, #2a3a33); }
  .mauve { border-color: #b77a9c; background: linear-gradient(155deg, #b77a9c, #8d637a 45%, #2e1824); }

  .callout { position: absolute; border: 3px solid #f00; pointer-events: none; z-index: 3; }
  .one { left: 238px; top: 343px; width: 389px; height: 111px; }
  .two { right: 71px; top: 659px; width: 279px; height: 93px; }
</style>
